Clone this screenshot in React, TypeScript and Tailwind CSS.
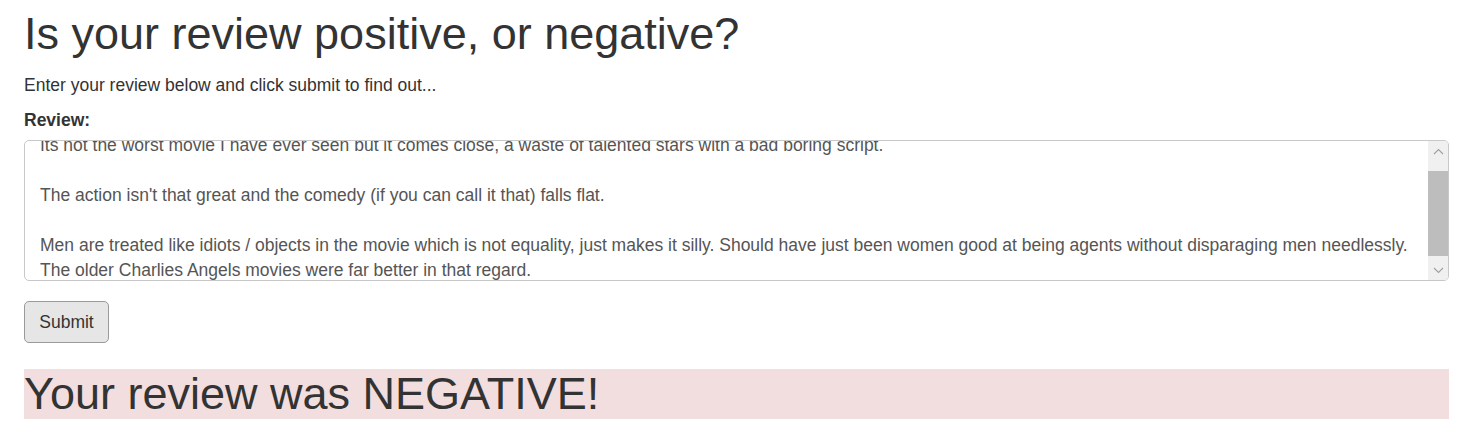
const reviewLines = [
    "Its not the worst movie I have ever seen but it comes close, a waste of talented stars with a bad boring script.",
    "",
    "The action isn't that great and the comedy (if you can call it that) falls flat.",
    "",
    "Men are treated like idiots / objects in the movie which is not equality, just makes it silly. Should have just been women good at being agents without disparaging men needlessly.",
    "The older Charlies Angels movies were far better in that regard.",
]

const ScrollBar = () => (
    <div className="flex w-[20px] shrink-0 flex-col bg-[#f0f0f0]">
        <div className="flex h-[20px] items-center justify-center">
            <svg width="11" height="7" viewBox="0 0 11 7" fill="none">
                <path d="M1 6L5.5 1.5L10 6" stroke="#a0a0a0" strokeWidth="1.1" />
            </svg>
        </div>
        <div className="flex-1 pt-[10px]">
            <div className="h-[85px] bg-[#bdbdbd]" />
        </div>
        <div className="flex h-[20px] items-center justify-center">
            <svg width="11" height="7" viewBox="0 0 11 7" fill="none">
                <path d="M1 1L5.5 5.5L10 1" stroke="#a0a0a0" strokeWidth="1.1" />
            </svg>
        </div>
    </div>
)

export default function App() {
    return (
        <div className="min-h-screen bg-white pl-[24px] pr-[26px] pt-[9px] font-['Liberation_Sans',Arial,sans-serif] text-[#333]">
            <h1 className="text-[45px] leading-[49.5px] font-normal">
                Is your review positive, or negative?
            </h1>
            <p className="mt-[14px] text-[17.5px] leading-[25px]">
                Enter your review below and click submit to find out...
            </p>
            <label className="mt-[10px] block text-[17.5px] leading-[25px] font-bold">
                Review:
            </label>
            <div className="mt-[7.5px] flex h-[141px] overflow-hidden rounded-[5px] border border-[#c8c8c8] bg-white">
                <div className="min-w-0 flex-1 overflow-hidden pl-[15px] pr-[10px] text-[17.5px] leading-[25px] text-[#555]">
                    <div className="-mt-[8.5px]">
                        {reviewLines.map((line, i) => (
                            <div key={i} className="h-[25px] whitespace-nowrap">
                                {line}
                            </div>
                        ))}
                    </div>
                </div>
                <ScrollBar />
            </div>
            <button className="mt-[20px] h-[42px] w-[85px] rounded-[5px] border border-[#9a9a9a] bg-[#e6e6e6] text-[17.5px] leading-[25px] text-[#333]">
                Submit
            </button>
            <div className="mt-[26px] bg-[#f2dede] text-[45px] leading-[49.5px]">
                Your review was NEGATIVE!
            </div>
        </div>
    )
}
